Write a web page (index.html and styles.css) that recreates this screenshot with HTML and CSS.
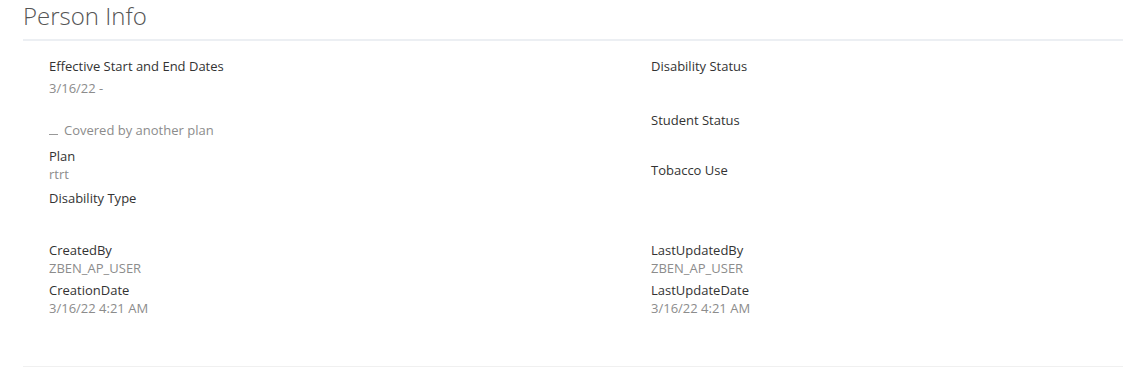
FILE: index.html
```html
<!DOCTYPE html>
<html lang="en">
    <head>
        <meta charset="UTF-8" />
        <meta name="viewport" content="width=device-width, initial-scale=1.0" />
        <title>Person Info</title>
        <link rel="stylesheet" href="styles.css">
    </head>
    <body>
        <div class="panel">
            <h2 class="panel-title">Person Info</h2>
            <div class="panel-body">
                <div class="cols">
                    <div class="col">
                        <div class="field">
                            <div class="label">Effective Start and End Dates</div>
                            <div class="value first">3/16/22 -</div>
                        </div>
                        <div class="note"><span class="dash"></span>Covered by another plan</div>
                        <div class="field">
                            <div class="label">Plan</div>
                            <div class="value">rtrt</div>
                        </div>
                        <div class="field">
                            <div class="label">Disability Type</div>
                            <div class="value"></div>
                        </div>
                    </div>
                    <div class="col side">
                        <div class="field tall">
                            <div class="label">Disability Status</div>
                        </div>
                        <div class="field tall short">
                            <div class="label">Student Status</div>
                        </div>
                        <div class="field">
                            <div class="label">Tobacco Use</div>
                        </div>
                    </div>
                </div>
                <div class="cols audit">
                    <div class="col">
                        <div class="field">
                            <div class="label">CreatedBy</div>
                            <div class="value">ZBEN_AP_USER</div>
                        </div>
                        <div class="field">
                            <div class="label">CreationDate</div>
                            <div class="value">3/16/22 4:21 AM</div>
                        </div>
                    </div>
                    <div class="col">
                        <div class="field">
                            <div class="label">LastUpdatedBy</div>
                            <div class="value">ZBEN_AP_USER</div>
                        </div>
                        <div class="field">
                            <div class="label">LastUpdateDate</div>
                            <div class="value">3/16/22 4:21 AM</div>
                        </div>
                    </div>
                </div>
            </div>
        </div>
    </body>
</html>
```

FILE: styles.css
```css
body {
    margin: 0;
    background: #fff;
    font-family: "Open Sans", "Noto Sans", sans-serif;
    color: #333;
}

.panel {
    padding-left: 23px;
}
.panel-title {
    margin: 0;
    font-size: 24px;
    font-weight: 300;
    line-height: 32px;
    padding: 0 0 7px;
    color: #555;
    border-bottom: 2px solid #eceff3;
}

.panel-body {
    padding: 16px 0 0 26px;
    border-bottom: 1px solid #f0f0f0;
    height: 326px;
    box-sizing: border-box;
}

.cols {
    display: grid;
    grid-template-columns: 602px 1fr;
}
.col {
    display: flex;
    flex-direction: column;
    gap: 6px;
}
.col.side {
    gap: 0;
}

.field {
    display: flex;
    flex-direction: column;
}
.field.tall {
    min-height: 54px;
}
.field.short {
    min-height: 50px;
}
.label {
    font-size: 13px;
    line-height: 18px;
    color: #333;
}
.value {
    font-size: 13px;
    line-height: 18px;
    color: #8c8c8c;
    min-height: 18px;
}
.value.first {
    margin-top: 4px;
}

.note {
    font-size: 13px;
    line-height: 18px;
    color: #8c8c8c;
    display: flex;
    align-items: center;
    margin: 18px 0 2px;
}
.note > .dash {
    width: 9px;
    border-bottom: 1px solid #999;
    margin: 8px 6px 0 0;
}

.audit {
    margin-top: 16px;
}
.audit > .col {
    gap: 4px;
}
```
